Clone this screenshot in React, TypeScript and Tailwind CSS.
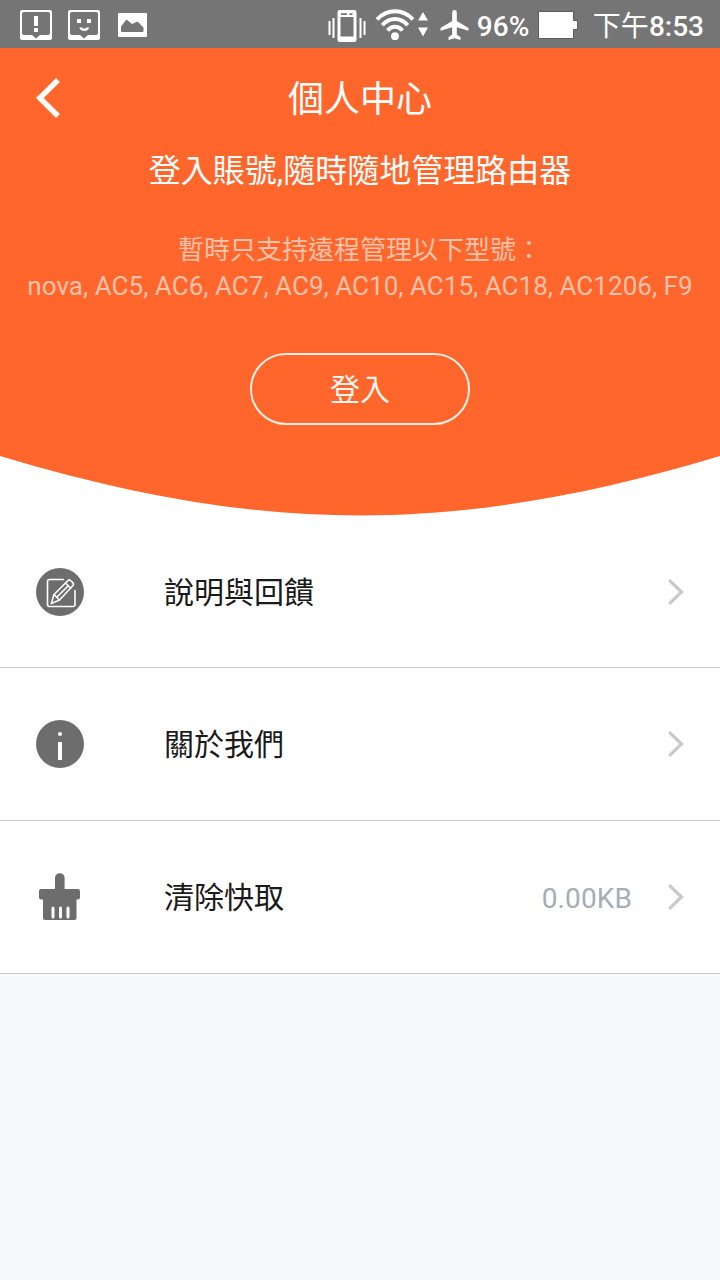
import type { ReactNode } from "react";

const MODELS = "nova, AC5, AC6, AC7, AC9, AC10, AC15, AC18, AC1206, F9";

function AlertBoxIcon() {
  return (
    <svg className="h-[30px] w-8" viewBox="0 0 32 30" fill="none">
      <rect width="32" height="30" rx="2" fill="#fff" />
      <path
        d="M4 2h24a2 2 0 0 1 2 2v19a2 2 0 0 1-2 2h-8l-4 3.5-4-3.5H4a2 2 0 0 1-2-2V4a2 2 0 0 1 2-2z"
        fill="#757575"
      />
      <path d="M14 6h4v10h-4zM14 18h4v4h-4z" fill="#fff" />
    </svg>
  );
}

function SmileBoxIcon() {
  return (
    <svg className="h-[30px] w-8" viewBox="0 0 32 30" fill="none">
      <rect width="32" height="30" rx="2" fill="#fff" />
      <path
        d="M4 2h24a2 2 0 0 1 2 2v19a2 2 0 0 1-2 2h-8l-4 3.5-4-3.5H4a2 2 0 0 1-2-2V4a2 2 0 0 1 2-2z"
        fill="#757575"
      />
      <path d="M9 9h4v4H9zM19 9h4v4h-4z" fill="#fff" />
      <path d="M12.500 17.500c.5 1.800 1.500 2.200 3.700 2.200s3.300-.4 3.800-2.200" stroke="#fff" strokeWidth="2.400" />
    </svg>
  );
}

function PictureIcon() {
  return (
    <svg className="h-6 w-[29px]" viewBox="0 0 29 24">
      <rect width="29" height="24" rx="1" fill="#fff" />
      <path
        d="M3.500 18.500v-5L8.500 7l5.500 4.500L19.500 9l5.500 5.500v4z"
        fill="#757575"
        stroke="#757575"
        strokeLinejoin="round"
      />
    </svg>
  );
}

function VibrateIcon() {
  return (
    <svg className="h-8 w-[38px]" viewBox="0 0 38 32" fill="none" stroke="#fff">
      <path d="M1.500 11v14M5.500 8v20M32.500 8v20M36.500 11v14" strokeWidth="2" />
      <path
        d="M11.500 0h15a2 2 0 0 1 2 2v28a2 2 0 0 1-2 2h-15a2 2 0 0 1-2-2V2a2 2 0 0 1 2-2zM12.500 7v19.500h13V7z"
        fill="#fff"
        fillRule="evenodd"
        stroke="none"
      />
      <path d="M13 4.200h6M21.500 4.200h3" stroke="#757575" strokeWidth="1.800" />
    </svg>
  );
}

function WifiIcon() {
  return (
    <svg className="h-[33px] w-[54px]" viewBox="0 0 54 33" fill="none">
      <g stroke="#fff" strokeWidth="4">
        <path d="M2 11.500C12 .5 28 .5 38 11.500" />
        <path d="M7.300 17.300C14.500 9 25.500 9 32.700 17.300" />
        <path d="M12.500 22.500C17 17.500 23 17.500 27.500 22.500" />
      </g>
      <circle cx="20" cy="28.200" r="3.900" fill="#fff" />
      <path d="M48 4l5 8.500H43zM43 19.500h10L48 28.500z" fill="#fff" />
    </svg>
  );
}

function AirplaneIcon() {
  return (
    <svg className="h-[30px] w-[29px]" viewBox="0 0 29 30" fill="#fff">
      <path d="M12.200 2.400a2.300 2.300 0 0 1 4.600 0V11L28.500 18v2.800L16.800 17.300v7.200l3.700 2.800V30l-6-1.700L8.500 30v-2.700l3.700-2.800v-7.200L.5 20.800V18L12.200 11z" />
    </svg>
  );
}

function StatusBar() {
  return (
    <div className="flex h-12 items-center bg-[#757575] pl-5 pr-4 text-[28px] font-medium leading-none text-white">
      <div className="mt-0.5 flex items-center gap-4">
        <AlertBoxIcon />
        <SmileBoxIcon />
        <div className="pl-0.5">
          <PictureIcon />
        </div>
      </div>
      <div className="ml-auto flex items-center">
        <div className="mt-1 mr-[9px]">
          <VibrateIcon />
        </div>
        <div className="mt-px">
          <WifiIcon />
        </div>
        <div className="ml-[11px] mt-px">
          <AirplaneIcon />
        </div>
        <span className="mt-1.5 ml-2 w-[52px] whitespace-nowrap">96%</span>
        <svg className="mt-0.5 ml-[9px] h-7 w-10" viewBox="0 0 40 28">
          <path
            d="M.5.5h35v9h4v9h-4v9H.5z"
            fill="#fff"
            stroke="#5c5c5c"
            strokeWidth="1"
          />
        </svg>
        <span className="mt-1.5 ml-[15px] whitespace-nowrap">
          <span className="font-normal">下午</span>8:53
        </span>
      </div>
    </div>
  );
}

function Header() {
  return (
    <header>
      <div className="flex h-[408px] flex-col items-center bg-[#ff662c] text-white">
        <div className="grid h-[100px] w-full grid-cols-[96px_1fr_96px] items-center">
          <button type="button" aria-label="返回" className="pl-9">
            <svg className="h-10 w-6" viewBox="0 0 24 40" fill="none">
              <path d="M22 2L3.800 20 22 38" stroke="#fff" strokeWidth="5.400" />
            </svg>
          </button>
          <h1 className="pt-[3px] text-center text-4xl">個人中心</h1>
        </div>
        <p className="mt-[3px] text-[32px] leading-[40px]">登入賬號,隨時隨地管理路由器</p>
        <div className="mt-[41px] text-center text-[26px] leading-9 text-[#ffc2ab]">
          <p>暫時只支持遠程管理以下型號：</p>
          <p className="whitespace-nowrap tracking-[0.04px]">{MODELS}</p>
        </div>
        <button
          type="button"
          className="mt-[49px] h-[72px] w-[220px] rounded-full border-2 border-[#fff0e6] text-[30px] text-[#fff5ee]"
        >
          登入
        </button>
      </div>
      <svg className="block h-[60px] w-full" viewBox="0 0 720 60">
        <path d="M0 0C264 79.300 456 79.300 720 0z" fill="#ff662c" />
      </svg>
    </header>
  );
}

function FeedbackIcon() {
  return (
    <svg className="size-12" viewBox="0 0 48 48" fill="none">
      <circle cx="24" cy="24" r="24" fill="#6d6d6d" />
      <g stroke="#fff" strokeWidth="1.600" strokeLinejoin="round" strokeLinecap="round">
        <path d="M27.500 11.500H13.500a2 2 0 0 0-2 2v23a2 2 0 0 0 2 2h23.500a2 2 0 0 0 2-2V22.500" />
        <path d="M15.300 35.500l2.700-9L32 12.500q1.300-1.200 2.600 0l2.400 2.400q1.200 1.300 0 2.600L23.500 32z" />
        <path d="M29.500 15l5 5M18 26.500l5.500 5.500M21 29L32 18" />
      </g>
    </svg>
  );
}

function AboutIcon() {
  return (
    <svg className="size-12" viewBox="0 0 48 48">
      <circle cx="24" cy="24" r="24" fill="#6d6d6d" />
      <circle cx="24" cy="14" r="2" fill="#fff" />
      <path d="M22 22h4v18h-4z" fill="#fff" />
    </svg>
  );
}

function BrushIcon() {
  return (
    <svg className="size-12" viewBox="0 0 48 48" fill="#6d6d6d">
      <path d="M19 16V5a4.800 4.800 0 0 1 9.600 0v11H42a2 2 0 0 1 2 2v6.500a2 2 0 0 1-2 2h-1.500V45a2 2 0 0 1-2 2H9a2 2 0 0 1-2-2V26.500H5a2 2 0 0 1-2-2V18a2 2 0 0 1 2-2z" />
      <path d="M17 35v9M24.500 35v9M32 35v9" stroke="#fff" strokeWidth="3" strokeLinecap="round" />
    </svg>
  );
}

function MenuRow({ icon, label, value }: { icon: ReactNode; label: string; value?: string }) {
  return (
    <li className="flex h-[153px] items-center border-b border-[#c8cccd] bg-white px-9 first:h-[152px]">
      {icon}
      <span className="ml-20 pt-px text-[30px] text-[#1a1a1a]">{label}</span>
      {value ? (
        <span className="ml-auto pt-[3px] text-[28px] tracking-[0.1px] text-[#a3afb5]">{value}</span>
      ) : null}
      <svg
        className={value ? "ml-9 h-[26px] w-4" : "ml-auto h-[26px] w-4"}
        viewBox="0 0 16 26"
        fill="none"
      >
        <path d="M1.200 1.200L13.500 13 1.200 24.800" stroke="#c9c9c9" strokeWidth="3.200" />
      </svg>
    </li>
  );
}

export default function App() {
  return (
    <div className="h-[1280px] w-[720px] overflow-hidden bg-[#f6f8fa] font-['Roboto','Noto_Sans_CJK_TC',sans-serif]">
      <StatusBar />
      <div className="bg-white">
        <Header />
        <ul>
          <MenuRow icon={<FeedbackIcon />} label="說明與回饋" />
          <MenuRow icon={<AboutIcon />} label="關於我們" />
          <MenuRow icon={<BrushIcon />} label="清除快取" value="0.00KB" />
        </ul>
      </div>
    </div>
  );
}
